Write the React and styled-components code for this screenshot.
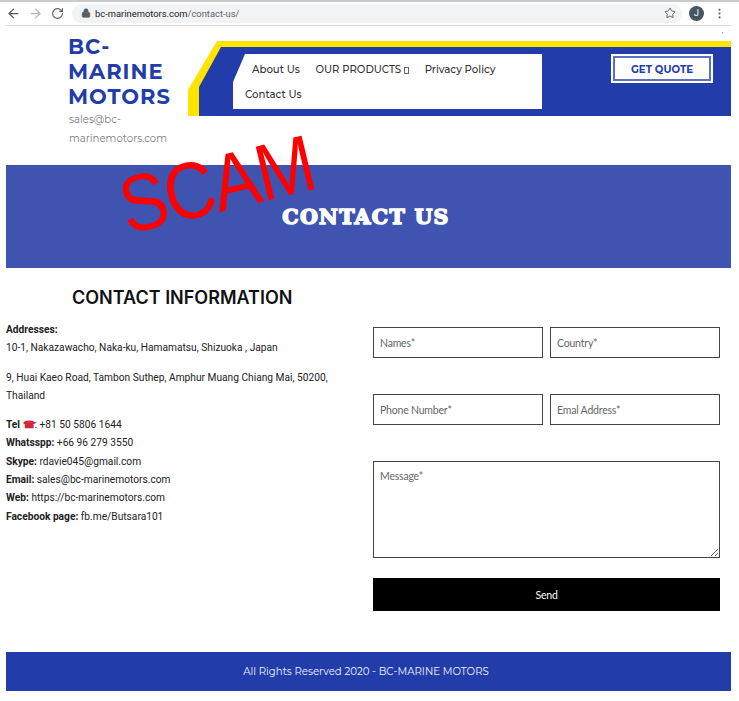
import React from 'react';
import styled, { createGlobalStyle } from 'styled-components';
import { ArrowLeft, ArrowRight, RotateCw, Lock, Star, EllipsisVertical } from 'lucide-react';

const GlobalStyle = createGlobalStyle`
  html, body {
    margin: 0;
    padding: 0;
    background: #fff;
  }
  * {
    box-sizing: border-box;
  }
`;

const Page = styled.div`
  position: relative;
  width: 739px;
  height: 701px;
  overflow: hidden;
  background: #fff;
  font-family: Roboto, sans-serif;
`;

const BrowserBar = styled.div`
  position: relative;
  height: 26px;
  padding: 0 0 2px 2px;
  border-top: 2px solid #c9c9c9;
  display: flex;
  align-items: center;
  color: #5a5d61;
  &::after {
    content: '';
    position: absolute;
    left: 6px;
    right: 8px;
    bottom: 0;
    height: 1px;
    background: #dcdee0;
  }
`;

const NavIcon = styled.span`
  display: flex;
  width: 22px;
  justify-content: center;
  color: ${props => (props.disabled ? '#b4b7ba' : '#56595d')};
`;

const AddressBar = styled.div`
  width: 610px;
  height: 19px;
  margin-left: 4px;
  padding: 0 6px 0 9px;
  border-radius: 10px;
  background: #f1f3f4;
  display: flex;
  align-items: center;
  font-size: 9.4px;
  color: #5f6368;
`;

const LockIcon = styled(Lock)`
  margin-right: 4px;
  fill: #5a5d61;
`;

const Host = styled.span`
  color: #202124;
`;

const StarIcon = styled(Star)`
  margin-left: auto;
`;

const Avatar = styled.span`
  width: 15px;
  height: 15px;
  margin-left: 7px;
  border-radius: 50%;
  background: #45565f;
  color: #fff;
  font-size: 9px;
  display: flex;
  align-items: center;
  justify-content: center;
`;

const MenuDots = styled.span`
  display: flex;
  margin-left: 9px;
`;

const Content = styled.div`
  padding: 0 8px 0 6px;
`;

const Header = styled.header`
  position: relative;
  height: 139px;
  display: flex;
  align-items: flex-start;
  font-family: Montserrat, Inter, sans-serif;
`;

const Brand = styled.div`
  width: 182px;
  padding: 8px 0 0 63px;
`;

const BrandName = styled.div`
  font-size: 21px;
  font-weight: 700;
  line-height: 25px;
  letter-spacing: 1px;
  margin-left: -1px;
  color: #223ca9;
`;

const BrandMail = styled.div`
  width: 112px;
  font-size: 10.2px;
  line-height: 19px;
  margin-top: 1px;
  color: #7b7b7b;
`;

const YellowBand = styled.div`
  flex: 1;
  height: 75px;
  margin-top: 15px;
  padding: 6px 0 0 11px;
  background: #ffe400;
  clip-path: polygon(0 100%, 0 65%, 29px 0, 100% 0, 100% 100%);
`;

const BlueBand = styled.div`
  height: 69px;
  padding: 7px 18px 0 34px;
  background: #223ca9;
  clip-path: polygon(0 100%, 0 40px, 22px 0, 100% 0, 100% 100%);
  display: flex;
  justify-content: space-between;
  align-items: flex-start;
`;

const NavPanel = styled.nav`
  width: 309px;
  height: 55px;
  padding: 3px 0 0 12px;
  background: #fff;
  clip-path: polygon(0 100%, 0 28px, 12px 0, 100% 0, 100% 100%);
  display: flex;
  flex-wrap: wrap;
  align-content: flex-start;
`;

const NavItem = styled.a`
  height: 25px;
  display: flex;
  align-items: center;
  gap: 3px;
  font-size: 10.2px;
  font-weight: 500;
  color: #333;
  margin-left: ${props => (props.$first ? '7px' : '0')};
  margin-right: 15.5px;
`;

const MissingGlyph = styled.span`
  width: 5px;
  height: 7px;
  margin-top: 2px;
  border: 1px solid #666;
`;

const QuoteButton = styled.button`
  width: 102px;
  height: 29px;
  padding: 1px 0 0;
  background: #fff;
  border: 3px solid #fff;
  outline: 2px solid #5d6fc0;
  outline-offset: -4px;
  color: #223ca9;
  font-family: Montserrat, Inter, sans-serif;
  font-size: 10.2px;
  font-weight: 700;
`;

const TinyMark = styled.span`
  position: absolute;
  right: 8px;
  top: 6px;
  width: 1px;
  height: 1px;
  background: #9aa5c9;
`;

const Hero = styled.section`
  height: 103px;
  background: #3f53b0;
  display: flex;
  align-items: center;
  justify-content: center;
  padding: 0 5px 0 0;
`;

const HeroTitle = styled.h1`
  margin: 0;
  font-family: 'DejaVu Serif', serif;
  font-size: 20.5px;
  font-weight: 700;
  letter-spacing: 1.3px;
  color: #fff;
  -webkit-text-stroke: 1.5px #fff;
`;

const ScamStamp = styled.div`
  position: absolute;
  left: 105px;
  top: 145px;
  font-family: 'Liberation Sans', Arial, sans-serif;
  font-size: 80px;
  line-height: 80px;
  color: #ff0000;
  transform: rotate(-13.5deg) scaleX(0.88);
  letter-spacing: -2px;
`;

const Columns = styled.div`
  display: grid;
  grid-template-columns: 367px 347px;
  margin-top: 18px;
`;

const InfoColumn = styled.div``;

const InfoTitle = styled.h2`
  margin: 0 0 12px 66px;
  font-family: Inter, sans-serif;
  font-size: 18px;
  line-height: 23px;
  font-weight: 600;
  color: #111;
`;

const InfoBlock = styled.p`
  width: 340px;
  margin: 0 0 11px;
  font-size: 10.2px;
  line-height: 18.3px;
  color: #222;
`;

const Phone = styled.span`
  color: #d6233c;
`;

const ContactForm = styled.form`
  display: grid;
  grid-template-columns: 170px 170px;
  column-gap: 7px;
  row-gap: 36px;
  padding-top: 41px;
`;

const Field = styled.input`
  width: 100%;
  height: 31px;
  padding: 0 6px;
  border: 1px solid #444;
  border-radius: 0;
  background: #fff;
  font-family: Lato, sans-serif;
  font-size: 10.5px;
  letter-spacing: -0.2px;
  &::placeholder {
    color: #666;
    opacity: 1;
  }
`;

const MessageField = styled.textarea`
  grid-column: 1 / 3;
  display: block;
  width: 100%;
  height: 97px;
  padding: 8px 6px;
  border: 1px solid #444;
  border-radius: 0;
  background: #fff;
  font-family: Lato, sans-serif;
  font-size: 10.5px;
  letter-spacing: -0.2px;
  &::placeholder {
    color: #666;
    opacity: 1;
  }
`;

const SendButton = styled.button`
  grid-column: 1 / 3;
  height: 33px;
  margin-top: -16px;
  border: none;
  background: #000;
  color: #fff;
  font-family: Lato, sans-serif;
  font-size: 10.5px;
  letter-spacing: -0.2px;
`;

const Footer = styled.footer`
  height: 39px;
  margin-top: 41px;
  background: #223ca9;
  color: #f1f3fb;
  font-family: Montserrat, Inter, sans-serif;
  font-size: 10.2px;
  display: flex;
  align-items: center;
  justify-content: center;
  padding-right: 5px;
`;

const App = () => (
  <Page>
    <GlobalStyle />
    <BrowserBar>
      <NavIcon><ArrowLeft size={15} /></NavIcon>
      <NavIcon disabled><ArrowRight size={15} /></NavIcon>
      <NavIcon><RotateCw size={13} /></NavIcon>
      <AddressBar>
        <LockIcon size={10} />
        <Host>bc-marinemotors.com</Host>/contact-us/
        <StarIcon size={12} />
      </AddressBar>
      <Avatar>J</Avatar>
      <MenuDots><EllipsisVertical size={13} /></MenuDots>
    </BrowserBar>
    <Content>
      <Header>
        <Brand>
          <BrandName>BC-MARINE MOTORS</BrandName>
          <BrandMail>sales@bc-marinemotors.com</BrandMail>
        </Brand>
        <YellowBand>
          <BlueBand>
            <NavPanel>
              <NavItem $first>About Us</NavItem>
              <NavItem>OUR PRODUCTS <MissingGlyph /></NavItem>
              <NavItem>Privacy Policy</NavItem>
              <NavItem>Contact Us</NavItem>
            </NavPanel>
            <QuoteButton type="button">GET QUOTE</QuoteButton>
          </BlueBand>
        </YellowBand>
        <TinyMark />
      </Header>
      <Hero>
        <HeroTitle>CONTACT US</HeroTitle>
      </Hero>
      <Columns>
        <InfoColumn>
          <InfoTitle>CONTACT INFORMATION</InfoTitle>
          <InfoBlock>
            <strong>Addresses:</strong><br />
            10-1, Nakazawacho, Naka-ku, Hamamatsu, Shizuoka , Japan
          </InfoBlock>
          <InfoBlock>
            9, Huai Kaeo Road, Tambon Suthep, Amphur Muang Chiang Mai, 50200, Thailand
          </InfoBlock>
          <InfoBlock>
            <strong>Tel <Phone>☎</Phone></strong>: +81 50 5806 1644<br />
            <strong>Whatsspp:</strong> +66 96 279 3550<br />
            <strong>Skype:</strong> rdavie045@gmail.com<br />
            <strong>Email:</strong> sales@bc-marinemotors.com<br />
            <strong>Web:</strong> https://bc-marinemotors.com<br />
            <strong>Facebook page:</strong> fb.me/Butsara101
          </InfoBlock>
        </InfoColumn>
        <ContactForm>
          <Field placeholder="Names*" />
          <Field placeholder="Country*" />
          <Field placeholder="Phone Number*" />
          <Field placeholder="Emal Address*" />
          <MessageField placeholder="Message*" />
          <SendButton type="button">Send</SendButton>
        </ContactForm>
      </Columns>
      <Footer>All Rights Reserved 2020 - BC-MARINE MOTORS</Footer>
    </Content>
    <ScamStamp>SCAM</ScamStamp>
  </Page>
);

export default App;
